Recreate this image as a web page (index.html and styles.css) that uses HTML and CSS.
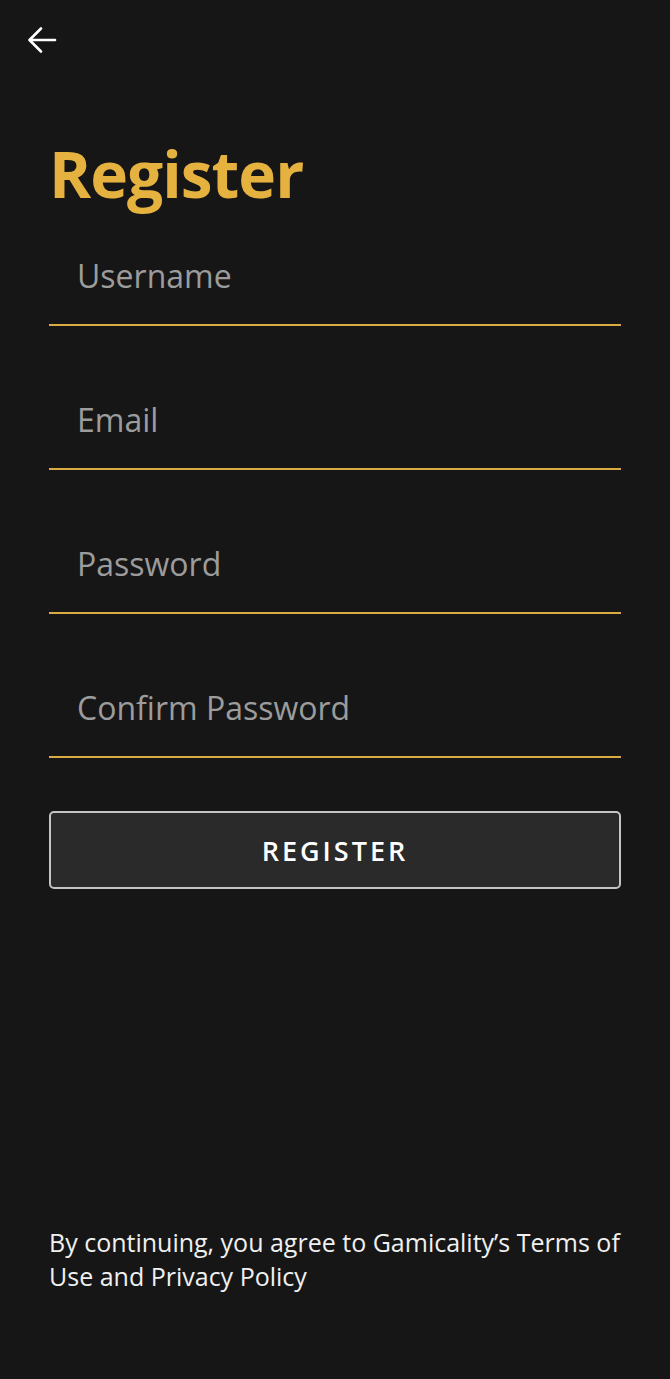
FILE: index.html
```html
<!DOCTYPE html>
<html lang="en">
<head>
<meta charset="utf-8">
<title>Register</title>
<link rel="stylesheet" href="styles.css">
</head>
<body>
<div class="page">
  <header class="topbar">
    <button class="back" aria-label="Back">
      <svg width="32" height="32" viewBox="0 0 32 32" fill="none" stroke="#ffffff" stroke-width="2.6" stroke-linecap="round" stroke-linejoin="round">
        <path d="M29 16H4"/>
        <path d="M15 4.5L3.5 16L15 27.5"/>
      </svg>
    </button>
  </header>
  <main class="content">
    <h1 class="title">Register</h1>
    <form class="form">
      <div class="field"><span class="placeholder">Username</span></div>
      <div class="field"><span class="placeholder">Email</span></div>
      <div class="field"><span class="placeholder">Password</span></div>
      <div class="field"><span class="placeholder">Confirm Password</span></div>
      <button type="button" class="submit">REGISTER</button>
    </form>
    <p class="legal">By continuing, you agree to Gamicality’s Terms of Use and Privacy Policy</p>
  </main>
</div>
</body>
</html>
```

FILE: styles.css
```css
html, body {
  margin: 0;
  padding: 0;
  background: #161616;
}

body {
  font-family: "Open Sans", "Noto Sans", sans-serif;
  color: #ffffff;
}

.page {
  min-height: 1379px;
  display: flex;
  flex-direction: column;
  box-sizing: border-box;
}

.topbar {
  padding: 24px 0 0 26px;
  height: 56px;
  box-sizing: border-box;
}

.back {
  background: none;
  border: none;
  padding: 0;
  width: 32px;
  height: 32px;
  display: block;
  cursor: pointer;
}

.content {
  flex: 1;
  display: flex;
  flex-direction: column;
  padding: 0 49px;
}

.title {
  margin: 78px 0 12px 0;
  font-size: 64px;
  line-height: 80px;
  font-weight: 700;
  color: #e6b23f;
  letter-spacing: -1px;
}

.form {
  display: flex;
  flex-direction: column;
  gap: 44px;
}

.field {
  padding: 28px 0 26px 28px;
  border-bottom: 2px solid #d9aa45;
  height: 44px;
  display: flex;
  align-items: center;
}

.placeholder {
  font-size: 32px;
  line-height: 44px;
  color: #9c9c9c;
}

.submit {
  margin-top: 9px;
  height: 78px;
  background: #2a2a2a;
  border: 2px solid #c4c4c4;
  border-radius: 5px;
  color: #ffffff;
  font-family: "Open Sans", "Noto Sans", sans-serif;
  font-size: 27px;
  font-weight: 600;
  letter-spacing: 3px;
  cursor: pointer;
}

.legal {
  margin: auto 0 86px 0;
  font-size: 25px;
  line-height: 34px;
  color: #f0f0f0;
}
```
